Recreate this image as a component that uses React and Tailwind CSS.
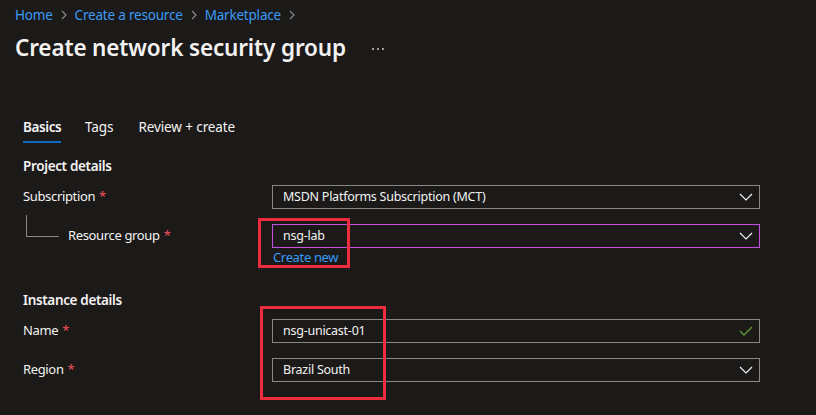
import React from "react";

const Chevron = () => (
  <svg width="14" height="8" viewBox="0 0 14 8" className="shrink-0">
    <polyline points="1,1 7,7 13,1" fill="none" stroke="#f3f2f1" strokeWidth="1.2" />
  </svg>
);

const Check = () => (
  <svg width="14" height="10" viewBox="0 0 14 10" className="shrink-0">
    <polyline points="1,5 5,9 13,1" fill="none" stroke="#5f9a36" strokeWidth="1.3" />
  </svg>
);

const Req = () => <span className="text-[#f1505b] ml-[4px]">*</span>;

const Crumb = ({ children }) => (
  <span className="flex items-center">
    <span className="text-[#3a9bf5]">{children}</span>
    <svg width="8" height="12" viewBox="0 0 8 12" className="mx-[7px]">
      <polyline points="2,2 6,6 2,10" fill="none" stroke="#8a8886" strokeWidth="1.2" />
    </svg>
  </span>
);

const Field = ({ children, border = "border-[#8a8886]", right }) => (
  <div className={`w-[488px] h-[24px] border ${border} flex items-center justify-between pl-[10px] pr-[6px] text-[12.5px] tracking-[-0.25px] text-[#f3f2f1] leading-none`}>
    <span>{children}</span>
    {right}
  </div>
);

export default function App() {
  return (
    <div
      className="relative w-[816px] h-[415px] bg-[#1b1a19] overflow-hidden text-[#f3f2f1]"
      style={{ fontFamily: '"Noto Sans", "Open Sans", sans-serif' }}
    >
      {/* breadcrumb */}
      <div className="h-[30px] flex items-center pl-[15px] text-[13.5px] tracking-[-0.2px]">
        <Crumb>Home</Crumb>
        <Crumb>Create a resource</Crumb>
        <Crumb>Marketplace</Crumb>
      </div>
      {/* title */}
      <div className="h-[36px] flex items-center pl-[15px]">
        <h1 className="text-[22.5px] font-semibold text-[#f3f2f1] tracking-[-0.15px]">Create network security group</h1>
        <div className="ml-[26px] flex gap-[3px] items-center pt-[2px]">
          <span className="w-[2px] h-[2px] bg-[#a19f9d]" />
          <span className="w-[2px] h-[2px] bg-[#a19f9d]" />
          <span className="w-[2px] h-[2px] bg-[#a19f9d]" />
        </div>
      </div>

      {/* tabs */}
      <div className="mt-[51px] pl-[23px] flex gap-[24px] text-[13.5px] tracking-[-0.1px]">
        <div className="flex flex-col w-[38px]">
          <span className="leading-[20px] font-semibold tracking-[-0.4px] whitespace-nowrap">Basics</span>
          <span className="mt-[4px] h-[2px] bg-[#1167c5]" />
        </div>
        <span className="leading-[20px]">Tags</span>
        <span className="leading-[20px] ml-[1px]">Review + create</span>
      </div>

      {/* form */}
      <div className="pl-[23px] text-[13px] tracking-[-0.35px]">
        <div className="mt-[13px] leading-[20px] font-semibold text-[13.5px]">Project details</div>

        <div className="mt-[9px] flex items-center h-[24px]">
          <div className="w-[249px]">Subscription<Req /></div>
          <Field right={<Chevron />}>MSDN Platforms Subscription (MCT)</Field>
        </div>

        <div className="mt-[15px] flex items-center h-[24px]">
          <div className="w-[249px] flex items-start">
            <span className="ml-[3px] -mt-[12px] w-[33px] h-[22px] border-l border-b border-[#8a8886]" />
            <span className="ml-[9px] -mt-[1px]">Resource group<Req /></span>
          </div>
          <Field border="border-[#c94fe0]" right={<Chevron />}>nsg-lab</Field>
        </div>
        <div className="pl-[250px] leading-[18px] h-[18px] text-[#3a9bf5]">Create new</div>

        <div className="mt-[24px] leading-[20px] font-semibold text-[13.5px]">Instance details</div>

        <div className="mt-[9px] flex items-center h-[24px]">
          <div className="w-[249px]">Name<Req /></div>
          <Field right={<Check />}>nsg-unicast-01</Field>
        </div>

        <div className="mt-[15px] flex items-center h-[24px]">
          <div className="w-[249px]">Region<Req /></div>
          <Field right={<Chevron />}>Brazil South</Field>
        </div>
      </div>

      {/* annotation boxes */}
      <div className="absolute left-[258px] top-[218px] w-[92px] h-[50px] border-[3px] border-[#ef2d3e]" />
      <div className="absolute left-[260px] top-[306px] w-[126px] h-[94px] border-[3px] border-[#ef2d3e]" />
    </div>
  );
}
